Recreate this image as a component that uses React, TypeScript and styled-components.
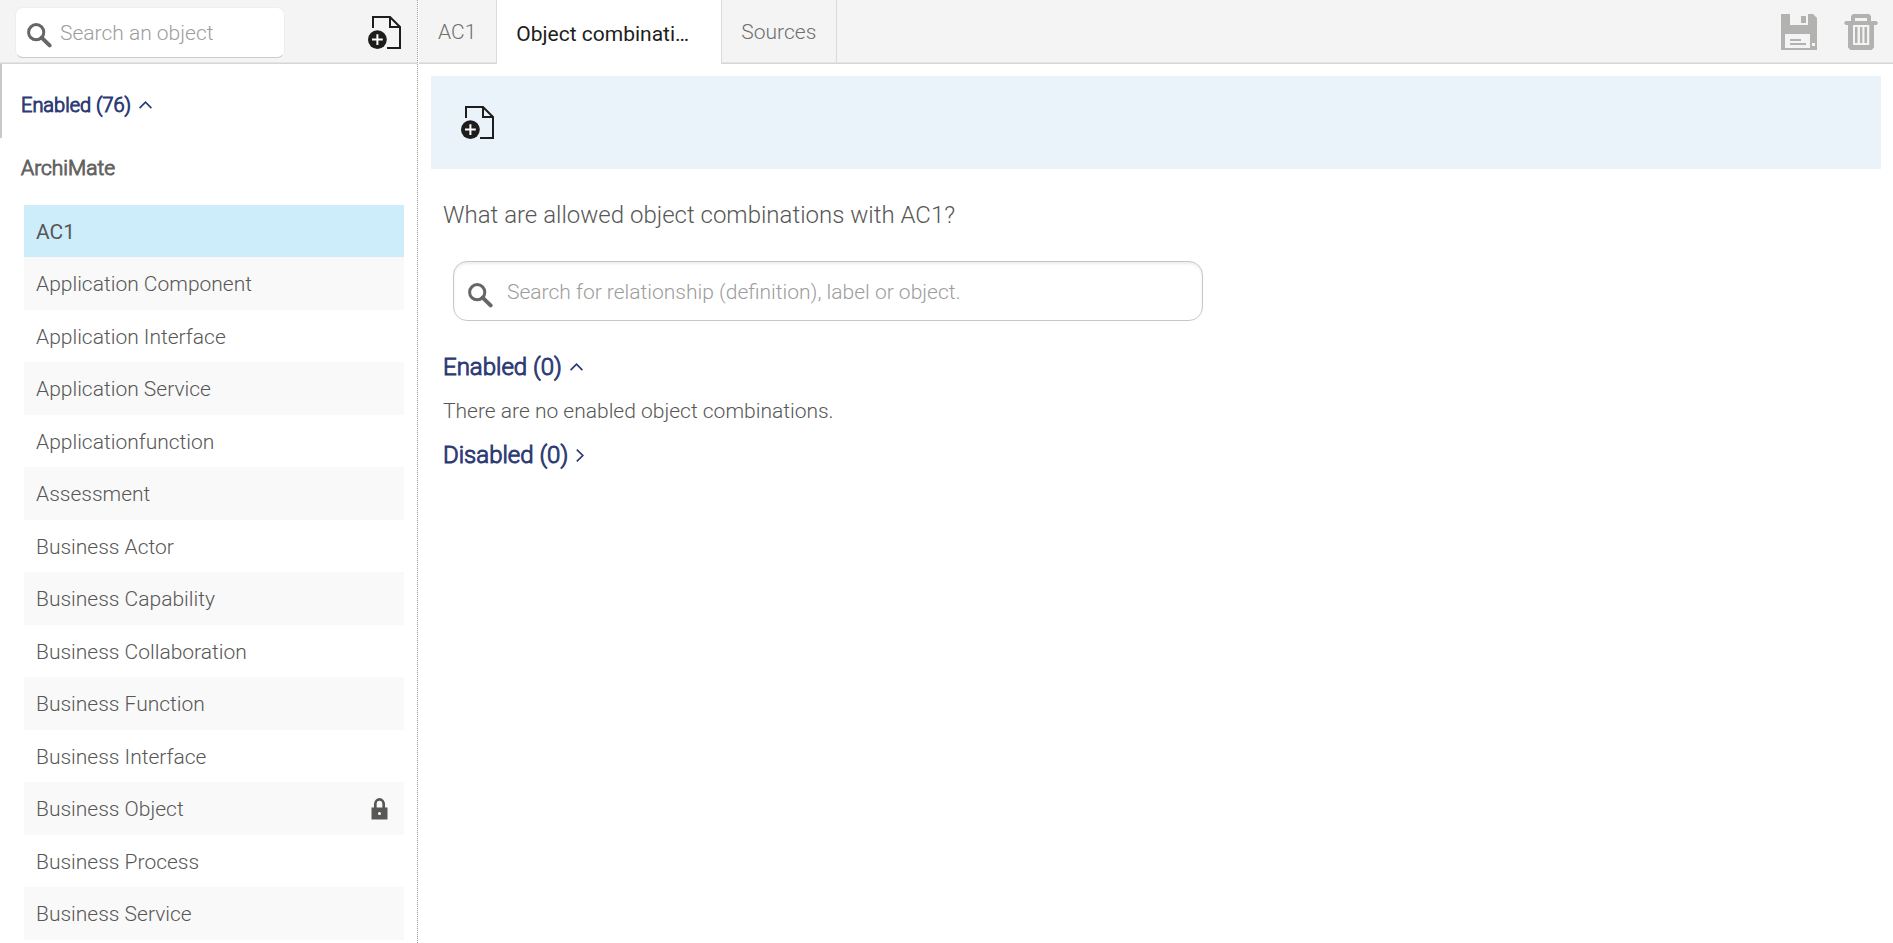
import React, { useState } from "react";
import styled, { createGlobalStyle } from "styled-components";

const GlobalStyle = createGlobalStyle`
  *, *::before, *::after { box-sizing: border-box; }
  html, body, #root { height: 100%; }
  body { margin: 0; overflow: hidden; background: #fff; }
  body, button, input {
    font-family: Roboto, "Liberation Sans", sans-serif;
    font-size: 21px;
    font-weight: 300;
    color: #575756;
  }
`;

const Page = styled.div`
  display: flex;
  height: 100vh;
  gap: 1px;
`;

const Sidebar = styled.aside`
  display: flex;
  flex-direction: column;
  flex: 0 0 418px;
  border-right: 1px dotted #999;
`;

const Main = styled.main`
  flex: 1;
  min-width: 0;
`;

const Bar = styled.div`
  display: flex;
  flex: 0 0 64px;
  height: 64px;
  background: #f4f4f4;
  box-shadow: inset 0 -1px #d6d6d6, inset 0 -2px #e4e4e4;
`;

const SideBar = styled(Bar)`
  align-items: center;
  justify-content: space-between;
  padding: 1px 16px 0 15px;
`;

const SearchBox = styled.label`
  display: flex;
  align-items: center;
  border: 1px solid #c6c6c6;
  background: #fff;
`;

const SideSearch = styled(SearchBox)`
  gap: 8px;
  width: 270px;
  height: 51px;
  padding: 0 11px;
  border-color: #eee #eee #ccc;
  border-radius: 8px;
`;

const MainSearch = styled(SearchBox)`
  gap: 14px;
  width: 750px;
  max-width: 100%;
  height: 60px;
  margin: 0 10px;
  padding: 2px 14px 0;
  border-radius: 14px;
  box-shadow: inset 0 2px 3px #eee;
`;

const SearchGlyph = styled.svg`
  flex: none;
  margin-top: 6px;
`;

const TextInput = styled.input`
  flex: 1;
  min-width: 0;
  padding: 0;
  border: 0;
  outline: 0;
  background: none;
  &::placeholder { color: #9d9d9c; opacity: 1; }
`;

const IconButton = styled.button`
  display: flex;
  padding: 0;
  border: 0;
  background: none;
  color: #1d1d1b;
  cursor: pointer;
  &:disabled { color: #b2b2b1; cursor: default; }
`;

const SideBody = styled.div`
  flex: 1;
  min-height: 0;
  overflow: hidden;
  background: linear-gradient(#c8c8c8, #c8c8c8) 0 0 / 2px 74px no-repeat;
  padding: 28px 13px 0 21px;
`;

const SectionToggle = styled.button<{ $large?: boolean }>`
  display: flex;
  align-items: center;
  gap: 8px;
  padding: 0;
  border: 0;
  background: none;
  color: #2d3b74;
  font-size: ${(p) => (p.$large ? 24 : 20)}px;
  -webkit-text-stroke: 1px currentColor;
  line-height: ${(p) => (p.$large ? 32 : 26)}px;
  cursor: pointer;
`;

const GroupTitle = styled.h2`
  margin: 37px 0 24px;
  color: #636362;
  font-size: 21px;
  font-weight: 300;
  -webkit-text-stroke: 1px currentColor;
  line-height: 26px;
`;

const ObjectList = styled.ul`
  margin: 0 0 0 3px;
  padding: 0;
  list-style: none;
`;

const ObjectItem = styled.li`
  height: 52px;
  &:nth-child(even) { height: 53px; background: #f9f9f9; }
`;

const ObjectButton = styled.button<{ $active: boolean }>`
  display: flex;
  align-items: center;
  justify-content: space-between;
  width: 100%;
  height: 100%;
  padding: 1px 16px 0 12px;
  border: 0;
  background: ${(p) => (p.$active ? "#cdedfa" : "none")};
  font-weight: ${(p) => (p.$active ? 400 : 300)};
  text-align: left;
  cursor: pointer;
`;

const Tabs = styled.div`
  display: flex;
  flex: 1;
`;

const Tab = styled.button<{ $active: boolean }>`
  max-width: 225px;
  padding: ${(p) => (p.$active ? "3px 25px 0 19px" : "0 20px 0 19px")};
  border: 0;
  border-right: 1px solid #dadada;
  overflow: hidden;
  background: ${(p) => (p.$active ? "#fff" : "none")};
  color: ${(p) => (p.$active ? "#1d1d1b" : "#6f6f6e")};
  font-weight: ${(p) => (p.$active ? 400 : 300)};
  text-overflow: ellipsis;
  white-space: nowrap;
  cursor: pointer;
`;

const Actions = styled.div`
  display: flex;
  align-items: center;
  gap: 27px;
  padding: 0 15px;
`;

const Toolbar = styled.div`
  display: flex;
  align-items: center;
  height: 93px;
  margin: 12px 12px 0;
  padding: 0 30px;
  background: #eaf3fa;
`;

const Content = styled.div`
  padding: 30px 24px;
`;

const Question = styled.h1`
  margin: 0 0 30px;
  font-size: 24px;
  font-weight: 300;
  line-height: 32px;
`;

const Results = styled.section`
  margin-top: 30px;
`;

const EmptyText = styled.p`
  margin: 10px 0;
  line-height: 36px;
`;

function AddFileIcon() {
  return (
    <svg width="33" height="33" viewBox="0 0 33 33" fill="none" stroke="currentColor" strokeWidth="2" aria-hidden="true">
      <path d="M5 12V1H22L32 11V32H19" />
      <path d="M22 1V11H32" />
      <circle cx="9.4" cy="23.6" r="9.4" fill="currentColor" stroke="none" />
      <path d="M4 23.6H14.8M9.4 18.2V29" stroke="#fff" />
    </svg>
  );
}

function SearchIcon() {
  return (
    <SearchGlyph width="25" height="25" viewBox="0 0 25 25" fill="none" stroke="#666665" aria-hidden="true">
      <circle cx="9.2" cy="9.2" r="7.6" strokeWidth="3" />
      <path d="M14.6 14.6L22.6 22.4" strokeWidth="4" strokeLinecap="round" />
    </SearchGlyph>
  );
}

function SaveIcon() {
  return (
    <svg width="36" height="36" viewBox="0 0 36 36" fill="currentColor" fillRule="evenodd" aria-hidden="true">
      <path d="M0 0H9V11H27V0H32L36 4V36H0ZM4 20V34H29V20ZM31 29V32H34V29Z" />
      <path d="M20 2H25V9H20ZM9 25H20V27H9ZM9 29H25V31H9Z" />
    </svg>
  );
}

function TrashIcon() {
  return (
    <svg width="34" height="36" viewBox="0 0 34 36" fill="currentColor" fillRule="evenodd" aria-hidden="true">
      <path d="M9 0H25L27 2V7H32.5L34 9L32.5 11H30V33.5L27.5 36H6.5L4 33.5V11H1.5L0 9L1.5 7H7V2ZM11 4V7H23V4ZM9 11V31H25.3V11Z" />
      <path d="M11 13H13.5V29H11ZM16 13H18.3V29H16ZM20.5 13H23V29H20.5Z" />
    </svg>
  );
}

function LockIcon() {
  return (
    <svg width="17" height="22" viewBox="0 0 17 22" role="img" aria-label="Locked">
      <path d="M4.3 11V6.2A4.2 4.8 0 0 1 12.7 6.2V11" fill="none" stroke="#575756" strokeWidth="2.7" />
      <path d="M0.5 9.5H16.5V21.5H0.5Z" fill="#575756" />
      <circle cx="8.5" cy="15.6" r="1.5" fill="#fff" />
    </svg>
  );
}

function Chevron({ open }: { open: boolean }) {
  return open ? (
    <svg width="13" height="8" viewBox="0 0 13 8" fill="none" stroke="currentColor" strokeWidth="1.7" aria-hidden="true">
      <path d="M0.6 7.2L6.5 1.2L12.4 7.2" />
    </svg>
  ) : (
    <svg width="8" height="13" viewBox="0 0 8 13" fill="none" stroke="currentColor" strokeWidth="1.7" aria-hidden="true">
      <path d="M0.8 0.6L6.8 6.5L0.8 12.4" />
    </svg>
  );
}

const objects = [
  "AC1", "Application Component", "Application Interface", "Application Service",
  "Applicationfunction", "Assessment", "Business Actor", "Business Capability",
  "Business Collaboration", "Business Function", "Business Interface",
  "Business Object", "Business Process", "Business Service",
];
const locked = "Business Object";
const tabs = ["AC1", "Object combinations", "Sources"];

export default function App() {
  const [selected, setSelected] = useState("AC1");
  const [tab, setTab] = useState("Object combinations");
  return (
    <>
      <GlobalStyle />
      <Page>
        <Sidebar>
          <SideBar>
            <SideSearch>
              <SearchIcon />
              <TextInput placeholder="Search an object" aria-label="Search an object" />
            </SideSearch>
            <IconButton aria-label="New object"><AddFileIcon /></IconButton>
          </SideBar>
          <SideBody>
            <SectionToggle aria-expanded>Enabled (76)<Chevron open /></SectionToggle>
            <GroupTitle>ArchiMate</GroupTitle>
            <ObjectList>
              {objects.map((name) => (
                <ObjectItem key={name}>
                  <ObjectButton $active={name === selected} onClick={() => setSelected(name)}>
                    {name}
                    {name === locked && <LockIcon />}
                  </ObjectButton>
                </ObjectItem>
              ))}
            </ObjectList>
          </SideBody>
        </Sidebar>
        <Main>
          <Bar>
            <Tabs role="tablist">
              {tabs.map((name) => (
                <Tab key={name} role="tab" aria-selected={name === tab} $active={name === tab} onClick={() => setTab(name)}>
                  {name}
                </Tab>
              ))}
            </Tabs>
            <Actions>
              <IconButton disabled aria-label="Save"><SaveIcon /></IconButton>
              <IconButton disabled aria-label="Delete"><TrashIcon /></IconButton>
            </Actions>
          </Bar>
          <Toolbar>
            <IconButton aria-label="New combination"><AddFileIcon /></IconButton>
          </Toolbar>
          <Content>
            <Question>What are allowed object combinations with AC1?</Question>
            <MainSearch>
              <SearchIcon />
              <TextInput
                placeholder="Search for relationship (definition), label or object."
                aria-label="Search combinations"
              />
            </MainSearch>
            <Results>
              <SectionToggle $large aria-expanded>Enabled (0)<Chevron open /></SectionToggle>
              <EmptyText>There are no enabled object combinations.</EmptyText>
              <SectionToggle $large aria-expanded={false}>Disabled (0)<Chevron open={false} /></SectionToggle>
            </Results>
          </Content>
        </Main>
      </Page>
    </>
  );
}
